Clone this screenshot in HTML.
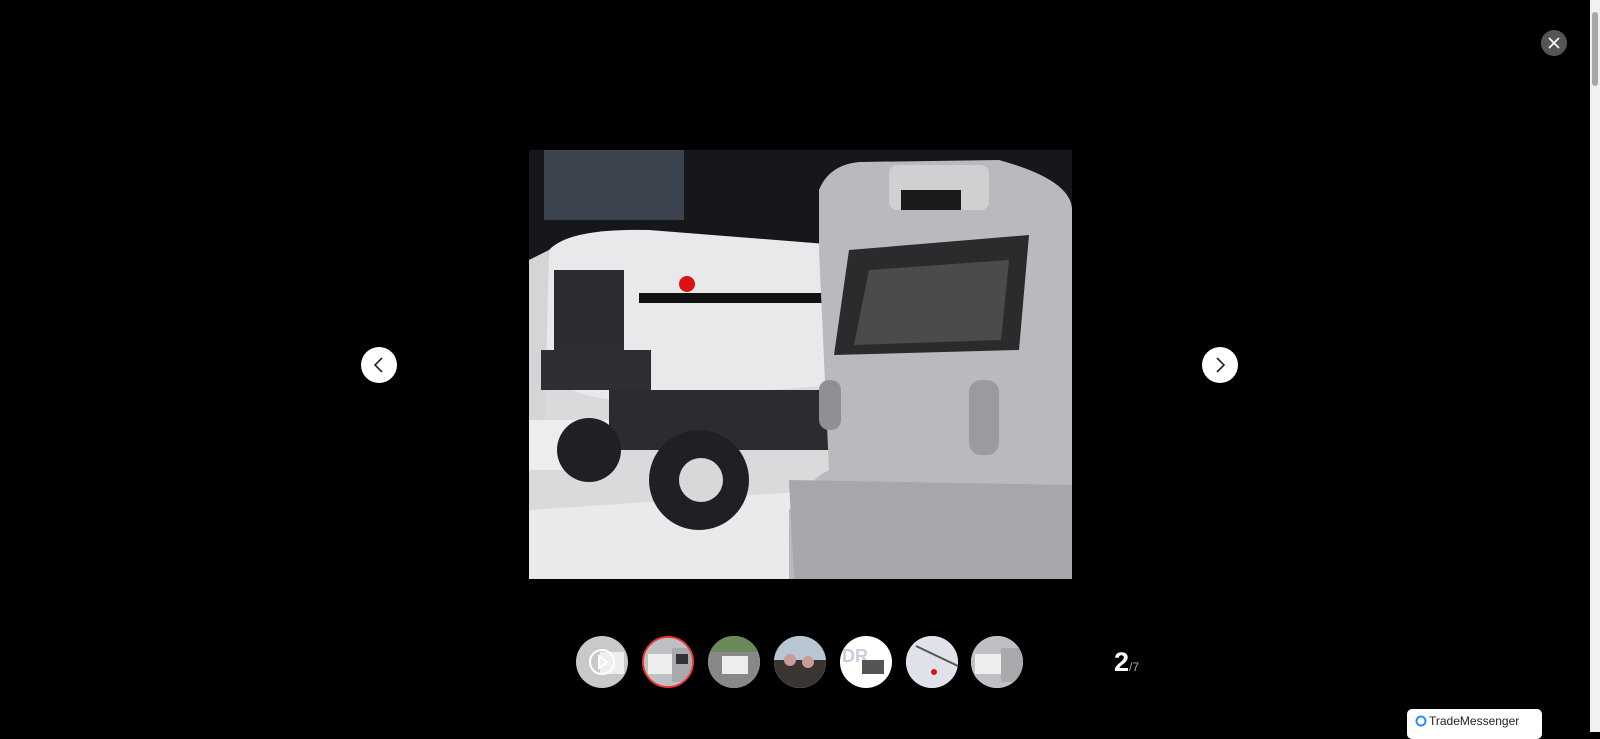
<!DOCTYPE html>
<html><head><meta charset="utf-8"><style>
html,body{margin:0;padding:0;width:1600px;height:732px;overflow:hidden;background:#000;font-family:"Liberation Sans",sans-serif}
.sb{position:absolute;left:1590px;top:0;width:10px;height:732px;background:#f1f1f1}
.sb i{position:absolute;left:2px;top:12px;width:6px;height:74px;background:#a8a8a8;border-radius:3px}
.close{position:absolute;left:1541px;top:30px;width:26px;height:26px;border-radius:50%;background:#555}
.arrow{position:absolute;top:347px;width:36px;height:36px;border-radius:50%;background:#fff}
.photo{position:absolute;left:529px;top:150px;width:543px;height:429px;overflow:hidden;background:#1a1c20}
.th{position:absolute;top:636px;width:52px;height:52px;border-radius:50%;overflow:hidden;background:#ddd}
.cnt{position:absolute;left:1114px;top:647px;color:#fff;font-size:27px;font-weight:bold}
.cnt span{font-size:12px;font-weight:normal;color:#aaa}
.tm{position:absolute;left:1407px;top:709px;width:135px;height:30px;background:#fff;border-radius:5px;font-size:12px;color:#222}
</style></head><body>
<div class="photo">
<svg width="543" height="429" viewBox="0 0 543 429">
<rect width="543" height="429" fill="#15171b"/>
<rect x="15" y="0" width="140" height="70" fill="#3c4450"/>
<rect x="0" y="230" width="543" height="199" fill="#d9dadc"/>
<path d="M0 360 L300 340 L300 429 L0 429Z" fill="#eaeaec"/>
<path d="M20 100 Q40 78 120 80 L310 95 L310 235 L100 250 Q20 250 15 200Z" fill="#e8e9eb"/>
<path d="M0 110 L20 100 L15 300 L0 300Z" fill="#d4d5d7"/>
<rect x="25" y="120" width="70" height="80" fill="#2b2d30"/>
<rect x="110" y="143" width="200" height="10" fill="#111"/>
<circle cx="158" cy="134" r="8" fill="#d11"/>
<rect x="12" y="200" width="110" height="40" fill="#2d2f33"/>
<rect x="80" y="240" width="240" height="60" fill="#2a2c30"/>
<rect x="0" y="270" width="80" height="50" fill="#eceded"/>
<circle cx="170" cy="330" r="50" fill="#1f2023"/><circle cx="172" cy="330" r="22" fill="#d8d8d8"/>
<circle cx="60" cy="300" r="32" fill="#1f2023"/>
<path d="M290 40 Q300 15 330 12 L470 10 Q543 30 543 60 L543 429 L260 429 L260 360 Q280 330 300 320 L290 100Z" fill="#b9babd"/>
<rect x="360" y="15" width="100" height="45" rx="8" fill="#cfd0d2"/>
<rect x="372" y="40" width="60" height="20" fill="#1a1a1a"/>
<path d="M320 100 L500 85 L490 200 L305 205Z" fill="#2a2b2d"/>
<path d="M340 120 L480 110 L472 190 L325 195Z" fill="#4a4c4c"/>
<rect x="290" y="230" width="22" height="50" rx="10" fill="#8f9094"/>
<rect x="440" y="230" width="30" height="75" rx="12" fill="#9a9b9f"/>
<path d="M260 330 L543 335 L543 429 L265 429Z" fill="#a6a7aa"/>
</svg></div>
<div class="arrow" style="left:361px"><svg width="36" height="36"><path d="M21 11 L14 18 L21 25" stroke="#222" stroke-width="1.6" fill="none"/></svg></div>
<div class="arrow" style="left:1202px"><svg width="36" height="36"><path d="M15 11 L22 18 L15 25" stroke="#222" stroke-width="1.6" fill="none"/></svg></div>
<div class="close"><svg width="26" height="26"><path d="M8 8 L18 18 M18 8 L8 18" stroke="#fff" stroke-width="1.6"/></svg></div>
<div class="th" style="left:576px;background:#c9c9c9"><svg width="52" height="52"><rect x="24" y="16" width="24" height="22" fill="#eee"/><circle cx="26" cy="26" r="12" fill="none" stroke="#fff" stroke-width="2"/><path d="M23 20 L31 26 L23 32Z" fill="none" stroke="#fff" stroke-width="2"/></svg></div>
<div class="th" style="left:642px;border:2px solid #e33;width:48px;height:48px;top:636px"><svg width="48" height="48"><rect width="48" height="48" fill="#bfc0c3"/><rect x="4" y="16" width="26" height="20" fill="#eee"/><rect x="28" y="10" width="20" height="34" fill="#a8a9ac"/><rect x="32" y="16" width="12" height="10" fill="#333"/></svg></div>
<div class="th" style="left:708px"><svg width="52" height="52"><rect width="52" height="52" fill="#888"/><rect width="52" height="16" fill="#6b8a5a"/><rect x="14" y="20" width="26" height="18" fill="#eee"/></svg></div>
<div class="th" style="left:774px"><svg width="52" height="52"><rect width="52" height="52" fill="#b8c6d4"/><rect y="24" width="52" height="28" fill="#3a3530"/><circle cx="16" cy="24" r="6" fill="#c99"/><circle cx="34" cy="26" r="6" fill="#c99"/></svg></div>
<div class="th" style="left:840px;background:#fff"><svg width="52" height="52"><text x="2" y="26" font-size="18" font-weight="bold" fill="#ccd" font-family="Liberation Sans">DR</text><rect x="22" y="24" width="22" height="14" fill="#555"/></svg></div>
<div class="th" style="left:906px"><svg width="52" height="52"><rect width="52" height="52" fill="#dfe2e8"/><path d="M10 10 L52 30" stroke="#555" stroke-width="2"/><circle cx="28" cy="36" r="3" fill="#d11"/></svg></div>
<div class="th" style="left:971px"><svg width="52" height="52"><rect width="52" height="52" fill="#bfc0c3"/><rect x="4" y="18" width="28" height="20" fill="#eee"/><rect x="30" y="12" width="22" height="34" fill="#a8a9ac"/></svg></div>
<div class="cnt">2<span>/7</span></div>
<div class="tm"><svg width="14" height="14" style="position:absolute;left:7px;top:5px"><circle cx="7" cy="7" r="4.5" fill="none" stroke="#2a8cf0" stroke-width="2"/></svg><span style="position:absolute;left:22px;top:5px">TradeMessenger</span></div>
<div class="sb"><i></i></div>
</body></html>
